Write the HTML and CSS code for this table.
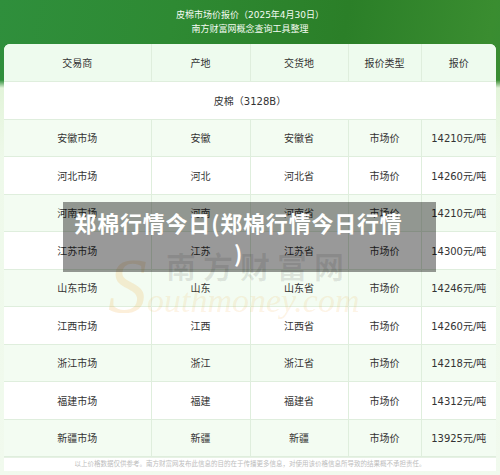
FILE: index.html
```html
<!DOCTYPE html>
<html lang="zh-CN">
<head>
<meta charset="utf-8">
<title>郑棉行情今日</title>
<link rel="stylesheet" href="styles.css">
</head>
<body>
<div class="page">
  <div class="hero">
    <div class="title">皮棉市场价报价（2025年4月30日）</div>
    <div class="subtitle">南方财富网概念查询工具整理</div>
  </div>
  <div class="card">
    <table class="prices">
      <colgroup>
        <col class="c1"><col class="c2"><col class="c3"><col class="c4"><col class="c5">
      </colgroup>
      <thead>
        <tr><th>交易商</th><th>产地</th><th>交货地</th><th>报价类型</th><th>报价</th></tr>
      </thead>
      <tbody>
        <tr class="cat"><td colspan="5">皮棉（3128B）</td></tr>
        <tr class="alt"><td>安徽市场</td><td>安徽</td><td>安徽省</td><td>市场价</td><td>14210元/吨</td></tr>
        <tr><td>河北市场</td><td>河北</td><td>河北省</td><td>市场价</td><td>14260元/吨</td></tr>
        <tr class="alt"><td>河南市场</td><td>河南</td><td>河南省</td><td>市场价</td><td>14210元/吨</td></tr>
        <tr><td>江苏市场</td><td>江苏</td><td>江苏省</td><td>市场价</td><td>14300元/吨</td></tr>
        <tr class="alt"><td>山东市场</td><td>山东</td><td>山东省</td><td>市场价</td><td>14246元/吨</td></tr>
        <tr><td>江西市场</td><td>江西</td><td>江西省</td><td>市场价</td><td>14260元/吨</td></tr>
        <tr class="alt"><td>浙江市场</td><td>浙江</td><td>浙江省</td><td>市场价</td><td>14218元/吨</td></tr>
        <tr><td>福建市场</td><td>福建</td><td>福建省</td><td>市场价</td><td>14312元/吨</td></tr>
        <tr class="alt"><td>新疆市场</td><td>新疆</td><td>新疆</td><td>市场价</td><td>13925元/吨</td></tr>
      </tbody>
    </table>
    <div class="note">以上价格数据仅供参考。南方财富网发布此信息的目的在于传播更多信息，对使用该价格信息所导致的结果概不承担责任。</div>
  </div>
  <div class="watermark">
    <div class="wm-cn">南方财富网</div>
    <div class="wm-en"><span class="wm-s">S</span>outhmoney.com</div>
  </div>
  <div class="overlay">郑棉行情今日(郑棉行情今日行情)</div>
</div>
</body>
</html>
```
FILE: styles.css
```css
html, body {
  margin: 0;
  padding: 0;
}
body {
  width: 500px;
  height: 475px;
  overflow: hidden;
  font-family: "DejaVu Sans", "Noto Sans CJK SC", sans-serif;
  background: #eef9ea;
}
.page {
  position: relative;
  width: 500px;
  height: 475px;
  background:
    linear-gradient(to bottom, rgba(0,0,0,0) 0, rgba(0,0,0,0) 80px, #e3f4da 88px, #eef9ea 160px, #f1faee 100%),
    linear-gradient(100deg, #2f8f3c 0%, #2e8a33 30%, #2b7f28 60%, #3a8d30 85%, #2f8a3a 100%);
}
.hero {
  padding-top: 8px;
  height: 36px;
  text-align: center;
  color: #f4fbf2;
  font-size: 9px;
  line-height: 14px;
}
.card {
  margin: 0 4px;
  background: #ffffff;
  border-radius: 6px 6px 0 0;
  overflow: hidden;
}
.prices {
  width: 492px;
  border-collapse: collapse;
  table-layout: fixed;
  font-size: 10px;
  color: #333333;
}
.c1 { width: 147px; }
.c2 { width: 99px; }
.c3 { width: 98px; }
.c4 { width: 73px; }
.c5 { width: 75px; }
.prices tr {
  height: 37.5px;
}
.prices th, .prices td {
  padding: 0;
  text-align: center;
  font-weight: normal;
  border: 1px solid #dfeedd;
  white-space: nowrap;
}
.prices th {
  background: #eefbee;
  border-top: none;
}
.prices tr > :first-child { border-left: none; }
.prices tr > :last-child { border-right: none; }
.prices .cat td {
  background: #ffffff;
}
.prices .alt td {
  background: #f3fcf2;
}
.note {
  height: 13px;
  border-top: 1px solid #e6f1e4;
  text-align: center;
  font-size: 6.5px;
  line-height: 13px;
  color: #bdbdbd;
  white-space: nowrap;
}
.watermark {
  position: absolute;
  left: 108px;
  top: 232px;
  width: 270px;
  height: 80px;
  pointer-events: none;
}
.wm-cn {
  position: absolute;
  left: 58px;
  top: 16px;
  font-family: "Noto Sans CJK SC", sans-serif;
  font-weight: bold;
  font-size: 30px;
  line-height: 34px;
  letter-spacing: 7px;
  color: rgba(0, 0, 0, 0.09);
}
.wm-en {
  position: absolute;
  left: 0;
  top: 34px;
  font-family: "Liberation Serif", serif;
  font-style: italic;
  font-size: 34px;
  line-height: 40px;
  color: rgba(240, 170, 60, 0.14);
}
.wm-s {
  font-size: 78px;
  line-height: 40px;
  color: rgba(240, 165, 50, 0.18);
}
.overlay {
  position: absolute;
  left: 63px;
  top: 202px;
  width: 373px;
  height: 70px;
  box-sizing: border-box;
  padding: 5px 32px 0 10px;
  background: rgba(0, 0, 0, 0.4);
  color: #ffffff;
  font-family: "Noto Sans CJK SC", sans-serif;
  font-weight: bold;
  font-size: 22px;
  line-height: 30px;
  text-align: center;
  letter-spacing: 0.8px;
  line-break: anywhere;
}
```
